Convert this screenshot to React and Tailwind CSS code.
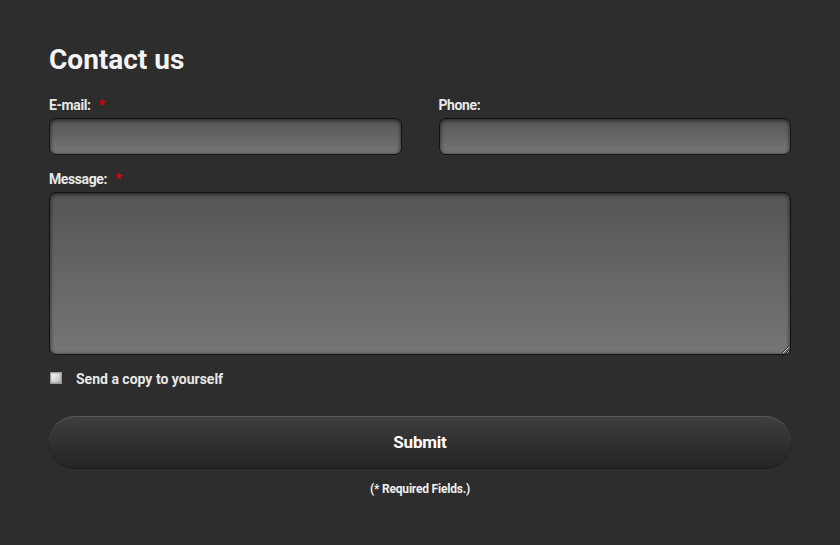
export default function App() {
  const field =
    'w-full rounded-[7px] border border-[#121212] bg-gradient-to-b from-[#555555] to-[#767676] shadow-[inset_0_1px_4px_rgba(0,0,0,0.7)] outline-none text-white px-2'

  return (
    <div className="min-h-[545px] w-full bg-[#2d2d2d] font-['Roboto',sans-serif] text-[#e8e8e8]">
      <form className="mx-[49px] pt-[44px]" onSubmit={(e) => e.preventDefault()}>
        <h1 className="text-[28px] leading-[32px] font-bold text-[#f4f4f4]">Contact us</h1>

        <div className="mt-[20px] grid grid-cols-2 gap-x-[37px]">
          <div>
            <label className="flex h-[18px] items-center text-[14px] font-bold tracking-[-0.4px]">
              E-mail:
              <span className="ml-[8px] text-[#e00000]">*</span>
            </label>
            <input type="text" className={`${field} mt-[4px] h-[37px]`} />
          </div>
          <div>
            <label className="flex h-[18px] items-center text-[14px] font-bold tracking-[-0.4px]">
              Phone:
            </label>
            <input type="text" className={`${field} mt-[4px] h-[37px]`} />
          </div>
        </div>

        <label className="mt-[15px] flex h-[18px] items-center text-[14px] font-bold tracking-[-0.4px]">
          Message:
          <span className="ml-[8px] text-[#e00000]">*</span>
        </label>
        <textarea className={`${field} mt-[4px] block h-[163px] py-1`} />

        <div className="mt-[15px] flex h-[18px] items-center">
          <span className="ml-[1px] -mt-[2px] block h-[12px] w-[12px] border border-[#9a9a9a] bg-gradient-to-br from-[#ffffff] to-[#b8b8b8] shadow-[inset_0_0_2px_rgba(0,0,0,0.4)]" />
          <span className="ml-[14px] text-[14px] font-bold">Send a copy to yourself</span>
        </div>

        <button
          type="submit"
          className="mt-[28px] flex h-[52px] w-full items-center justify-center rounded-full border-t border-[#5a5a5a] bg-gradient-to-b from-[#3e3e3e] to-[#242424] text-[17px] font-bold tracking-[-0.2px] text-white shadow-[0_1px_1px_rgba(0,0,0,0.4)]"
        >
          Submit
        </button>

        <p className="mt-[12px] text-center text-[12px] font-bold tracking-[-0.2px] text-[#f0f0f0]">
          (* Required Fields.)
        </p>
      </form>
    </div>
  )
}
